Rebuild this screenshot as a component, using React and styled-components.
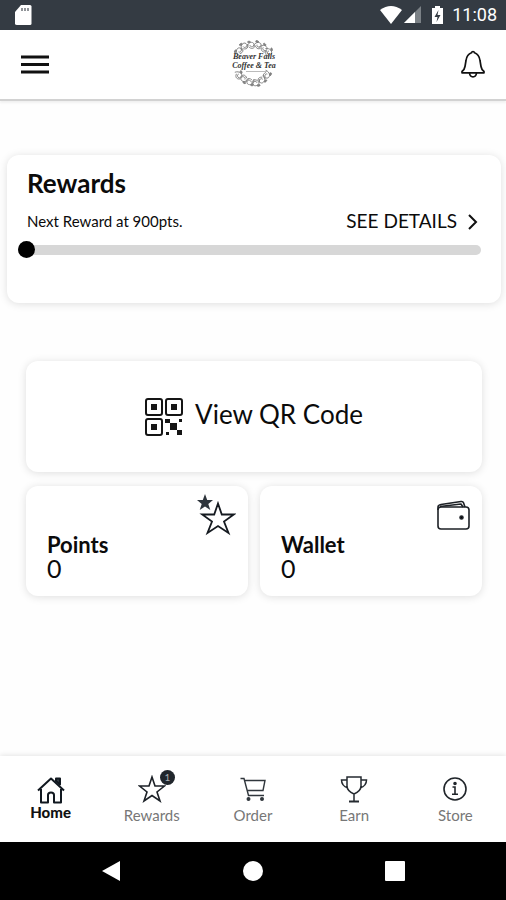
import React from "react";
import styled, { createGlobalStyle, css } from "styled-components";

const GlobalStyle = createGlobalStyle`
  *, *::before, *::after { box-sizing: border-box; }
  body {
    margin: 0;
    background: #fefefe;
    color: #0b0b0b;
    font-family: Lato, "Open Sans", sans-serif;
  }
  button { font: inherit; color: inherit; border: 0; padding: 0; background: none; cursor: pointer; }
  svg { display: block; flex: none; }
`;

const Screen = styled.div`
  display: flex;
  flex-direction: column;
  min-height: 100vh;
`;

const StatusBar = styled.div`
  display: flex;
  align-items: center;
  justify-content: space-between;
  height: 30px;
  padding: 0 9px 0 14px;
  background: #343b43;
  color: #fff;
`;

const StatusGroup = styled.div`
  display: flex;
  align-items: center;
  gap: 8px;
`;

const Clock = styled.time`
  font: 400 18px/24px Roboto, sans-serif;
`;

const Header = styled.header`
  display: grid;
  grid-template-columns: 1fr auto 1fr;
  align-items: center;
  height: 71px;
  padding: 0 20px;
  background: #fff;
  border-bottom: 2px solid #d2d2d2;
  box-shadow: 0 2px 2px #f1f1f1;
`;

const IconButton = styled.button`
  justify-self: ${(p) => p.$side};
`;

const Main = styled.main`
  flex: 1;
  padding: 54px 5px 0 7px;
`;

const cardStyle = css`
  background: #fff;
  border-radius: 12px;
  box-shadow: 0 1px 9px rgba(0, 0, 0, 0.13);
`;

const RewardsCard = styled.section`
  ${cardStyle}
  height: 148px;
  padding: 12px 20px;
`;

const CardTitle = styled.h2`
  margin: 0;
  font-size: 26px;
  line-height: 32px;
  font-weight: 700;
`;

const RewardLine = styled.div`
  display: flex;
  align-items: center;
  justify-content: space-between;
  margin-top: 4px;
`;

const RewardHint = styled.label`
  font-size: 15px;
  line-height: 36px;
`;

const DetailsLink = styled.a`
  display: flex;
  align-items: center;
  gap: 10px;
  padding-right: 2px;
  color: inherit;
  font-size: 19px;
  line-height: 34px;
  text-decoration: none;
`;

const Progress = styled.input`
  appearance: none;
  display: block;
  width: calc(100% + 9px);
  height: 18px;
  margin: 2px 0 0 -9px;
  background: none;

  &::-webkit-slider-runnable-track {
    height: 10px;
    border-radius: 5px;
    background: #d7d7d7;
  }
  &::-webkit-slider-thumb {
    appearance: none;
    width: 17px;
    height: 17px;
    margin-top: -4px;
    border-radius: 50%;
    background: #000;
  }
`;

const Actions = styled.div`
  display: grid;
  grid-template-columns: 1fr 1fr;
  gap: 14px 12px;
  margin: 58px 19px 0;
`;

const QrButton = styled.button`
  ${cardStyle}
  grid-column: 1 / -1;
  display: flex;
  align-items: center;
  justify-content: center;
  gap: 12px;
  height: 111px;
  font-size: 26px;
  line-height: 36px;
`;

const QrLabel = styled.span`
  padding-bottom: 6px;
`;

const Tile = styled.section`
  ${cardStyle}
  display: flex;
  flex-direction: column;
  height: 110px;
  padding: 8px 12px 14px 21px;
`;

const TileIcon = styled.div`
  align-self: flex-end;
  height: 39px;
`;

const TileTitle = styled.h3`
  margin: 0;
  font-size: 22px;
  line-height: 23px;
  font-weight: 700;
`;

const TileValue = styled.p`
  margin: 0;
  font-size: 25px;
  line-height: 24px;
`;

const TabBar = styled.nav`
  display: grid;
  grid-template-columns: repeat(5, 1fr);
  height: 86px;
  background: #fff;
  box-shadow: 0 -1px 5px rgba(0, 0, 0, 0.1);
`;

const Tab = styled.a`
  display: flex;
  flex-direction: column;
  align-items: center;
  gap: ${(p) => (p.$active ? 0 : 3)}px;
  padding-top: 19px;
  color: ${(p) => (p.$active ? "#111" : "#777")};
  font-size: 15px;
  line-height: ${(p) => (p.$active ? 16 : 18)}px;
  font-weight: ${(p) => (p.$active ? 900 : 400)};
  text-decoration: none;
`;

const TabIcon = styled.span`
  position: relative;
  display: block;
`;

const Badge = styled.span`
  position: absolute;
  top: -5px;
  right: -9px;
  width: 15px;
  height: 15px;
  border-radius: 50%;
  background: #20262c;
  color: #aab0b5;
  font-size: 10px;
  line-height: 15px;
  font-weight: 400;
  text-align: center;
`;

const SystemBar = styled.div`
  display: grid;
  grid-template-columns: repeat(3, 142px);
  justify-content: center;
  justify-items: center;
  align-items: center;
  height: 58px;
  background: #000;
`;

const STAR = "M14 2 17 11H26.500L19 17 22 26 14 20.500 6 26 9 17 1.500 11H11Z";

const SdCard = () => (
  <svg width="18" height="20" viewBox="0 0 18 20" aria-hidden="true">
    <path d="M7 0h9q1.500 0 1.500 1.500v17q0 1.500-1.500 1.500H3q-2 0-2-1.500V7Z" fill="#fff" />
    <path d="M8 3v3M11 3v3M14 3v3" stroke="#6c7277" strokeWidth="1.500" />
  </svg>
);

const StatusIcons = () => (
  <svg width="64" height="20" viewBox="0 0 64 20" aria-hidden="true">
    <path d="M0 5Q11-3 22 5L11 19Z" fill="#fff" />
    <path d="M41 1v17H24Z" fill="#7b8186" />
    <path d="M35 7v11H24Z" fill="#fff" />
    <path d="M55 1h5v2h3v16H52V3h3Z" fill="#fff" />
    <path d="M58.500 5 54.500 12h3l-1 5 4-7h-3Z" fill="#343b43" />
  </svg>
);

const Menu = () => (
  <svg width="30" height="22" viewBox="0 0 30 22" aria-hidden="true">
    <path d="M1 3h28M1 10.500h28M1 18h28" stroke="#111" strokeWidth="3" />
  </svg>
);

const Bell = () => (
  <svg width="26" height="30" viewBox="0 0 26 30" fill="none" stroke="#111" strokeWidth="1.700" strokeLinejoin="round" aria-hidden="true">
    <path d="M13 1.500c-1.200 0-1.500 1.300-1.500 1.300C8 4 6.500 7 6 10.500l-1 6c-.4 2.500-1 3.500-3 5v1.300h22v-1.300c-2-1.500-2.600-2.500-3-5l-1-6c-.5-3.500-2-6.500-5.500-7.700 0 0-.3-1.300-1.500-1.300Z" />
    <path d="M9.500 23c.3 2.500 1.500 3.900 3.500 3.900s3.200-1.400 3.500-3.900" />
  </svg>
);

const SPRIGS = [
  [11, 11, -60], [16, 6, -30], [23, 5, 0], [30, 5, 20], [36, 8, 45], [41, 12, 80],
  [11, 35, 70], [16, 39, 210], [22, 42, 180], [28, 43, 165], [34, 40, 140], [39, 35, 110],
];

const Logo = () => (
  <svg width="50" height="50" viewBox="0 0 50 50" role="img" aria-label="Beaver Falls Coffee &amp; Tea">
    <g fill="none" stroke="#777" strokeWidth="0.800">
      {SPRIGS.map(([x, y, angle]) => (
        <g key={`${x}-${y}`} transform={`translate(${x} ${y}) rotate(${angle})`}>
          <path d="M-4 3C-4-3 2-4 3-1S-1 3-1 0M-2 2C1 5 4 3 4 0" />
          <ellipse cx="-2" cy="-3" rx="1.500" ry="0.800" fill="#888" />
        </g>
      ))}
      <path d="M18 31.500h21" stroke="#aaa" />
    </g>
    <g fill="#333" fontFamily="Liberation Serif, serif" fontStyle="italic" fontWeight="700" textAnchor="middle">
      <text x="26" y="19" fontSize="8">Beaver Falls</text>
      <text x="26" y="28" fontSize="8">Coffee &amp; Tea</text>
    </g>
  </svg>
);

const Chevron = () => (
  <svg width="12" height="18" viewBox="0 0 12 18" aria-hidden="true">
    <path d="m2 3 7 7-7 7" fill="none" stroke="#111" strokeWidth="2" />
  </svg>
);

const QrIcon = () => (
  <svg width="38" height="38" viewBox="0 0 38 38" aria-hidden="true">
    <g fill="none" stroke="#151515" strokeWidth="2">
      <rect x="1" y="1" width="16" height="16" rx="2" />
      <rect x="21" y="1" width="16" height="16" rx="2" />
      <rect x="1" y="21" width="16" height="16" rx="2" />
    </g>
    <path d="M6 6h6v6H6zM26 6h6v6h-6zM6 26h6v6H6zM20 21h5v4h-5zM34 21h3v3h-3zM25 25h7v7h-7zM21 34h3v3h-3zM32 32h5v5h-5z" fill="#151515" />
  </svg>
);

const PointsIcon = () => (
  <svg width="40" height="42" viewBox="0 0 40 42" aria-hidden="true">
    <path d="m9 0 2.200 6H17l-4.700 4 2 6L9 12.500 3.700 16l2-6L1 6h5.800Z" fill="#2e353c" />
    <path d="m22 9.500 3.800 11h12L28 27.500 32.500 39 22 32 11.500 39 16 27.500 6.200 20.500h12Z" fill="#fff" stroke="#151a20" strokeWidth="1.800" />
  </svg>
);

const WalletIcon = () => (
  <svg width="33" height="38" viewBox="0 0 33 38" fill="none" stroke="#1d2126" strokeWidth="1.600" strokeLinejoin="round" aria-hidden="true">
    <rect x="1" y="13" width="31" height="22" rx="3" />
    <path d="M1 16v-3q0-2 3-2.500L24 7.500q2-.3 2.500 1.200L28 13M3 12.500l21-2.500 2 3" />
    <circle cx="24.500" cy="23.500" r="1.500" fill="#000" />
  </svg>
);

const HomeIcon = () => (
  <svg width="30" height="29" viewBox="0 0 30 29" fill="none" stroke="#111820" strokeWidth="2" strokeLinejoin="round" aria-hidden="true">
    <path d="M20 6V3.500h4V9.500Z" fill="#303840" />
    <path d="M2 15.500 15 3.500l13 12M5 14v13.500h7V20q0-2.500 3-2.500t3 2.500v7.500h7V14" />
  </svg>
);

const StarIcon = () => (
  <svg width="28" height="28" viewBox="0 0 28 28" aria-hidden="true">
    <path d={STAR} fill="none" stroke="#1c2127" strokeWidth="1.600" />
  </svg>
);

const CartIcon = () => (
  <svg width="28" height="28" viewBox="0 0 28 28" fill="none" stroke="#30363c" strokeWidth="1.400" aria-hidden="true">
    <path d="M1.500 3.500H5L9.500 20.500H25M6 5.500h20l-2 10H8.200" />
    <circle cx="9.500" cy="24" r="1.300" fill="#30363c" />
    <circle cx="23" cy="24" r="1.300" fill="#30363c" />
  </svg>
);

const TrophyIcon = () => (
  <svg width="28" height="28" viewBox="0 0 28 28" fill="none" stroke="#252a30" strokeWidth="1.500" aria-hidden="true">
    <path d="M7 2h14v9q0 5-7 8-7-3-7-8ZM7 5H1.500q0 6 6.500 8M21 5h5.500q0 6-6.500 8M14 19v7" />
    <path d="M9 26.500h10" strokeWidth="2" />
  </svg>
);

const InfoIcon = () => (
  <svg width="28" height="28" viewBox="0 0 28 28" fill="none" stroke="#20252a" strokeWidth="1.600" aria-hidden="true">
    <circle cx="14" cy="14" r="11" />
    <path d="M11.500 12H14v7M11 19.200h6" />
    <circle cx="14" cy="8.500" r="1" fill="#20252a" />
  </svg>
);

const TABS = [
  { label: "Home", Icon: HomeIcon, active: true },
  { label: "Rewards", Icon: StarIcon, badge: 1 },
  { label: "Order", Icon: CartIcon },
  { label: "Earn", Icon: TrophyIcon },
  { label: "Store", Icon: InfoIcon },
];

const TILES = [
  { label: "Points", value: 0, Icon: PointsIcon },
  { label: "Wallet", value: 0, Icon: WalletIcon },
];

export default function App() {
  return (
    <Screen>
      <GlobalStyle />
      <StatusBar>
        <SdCard />
        <StatusGroup>
          <StatusIcons />
          <Clock>11:08</Clock>
        </StatusGroup>
      </StatusBar>
      <Header>
        <IconButton $side="start" aria-label="Menu"><Menu /></IconButton>
        <Logo />
        <IconButton $side="end" aria-label="Notifications"><Bell /></IconButton>
      </Header>
      <Main>
        <RewardsCard>
          <CardTitle>Rewards</CardTitle>
          <RewardLine>
            <RewardHint htmlFor="progress">Next Reward at 900pts.</RewardHint>
            <DetailsLink href="#details">SEE DETAILS <Chevron /></DetailsLink>
          </RewardLine>
          <Progress id="progress" type="range" min="0" max="900" defaultValue="0" />
        </RewardsCard>
        <Actions>
          <QrButton><QrIcon /><QrLabel>View QR Code</QrLabel></QrButton>
          {TILES.map(({ label, value, Icon }) => (
            <Tile key={label}>
              <TileIcon><Icon /></TileIcon>
              <TileTitle>{label}</TileTitle>
              <TileValue>{value}</TileValue>
            </Tile>
          ))}
        </Actions>
      </Main>
      <TabBar>
        {TABS.map(({ label, Icon, active, badge }) => (
          <Tab key={label} href={`#${label.toLowerCase()}`} $active={active}>
            <TabIcon><Icon />{badge && <Badge>{badge}</Badge>}</TabIcon>
            {label}
          </Tab>
        ))}
      </TabBar>
      <SystemBar>
        <IconButton aria-label="Back">
          <svg width="20" height="22" viewBox="0 0 20 22"><path d="M19 1v20L1 11Z" fill="#fff" /></svg>
        </IconButton>
        <IconButton aria-label="Home screen">
          <svg width="22" height="22" viewBox="0 0 22 22"><circle cx="11" cy="11" r="10" fill="#fff" /></svg>
        </IconButton>
        <IconButton aria-label="Recent apps">
          <svg width="20" height="20" viewBox="0 0 20 20"><rect width="20" height="20" rx="1" fill="#fff" /></svg>
        </IconButton>
      </SystemBar>
    </Screen>
  );
}
